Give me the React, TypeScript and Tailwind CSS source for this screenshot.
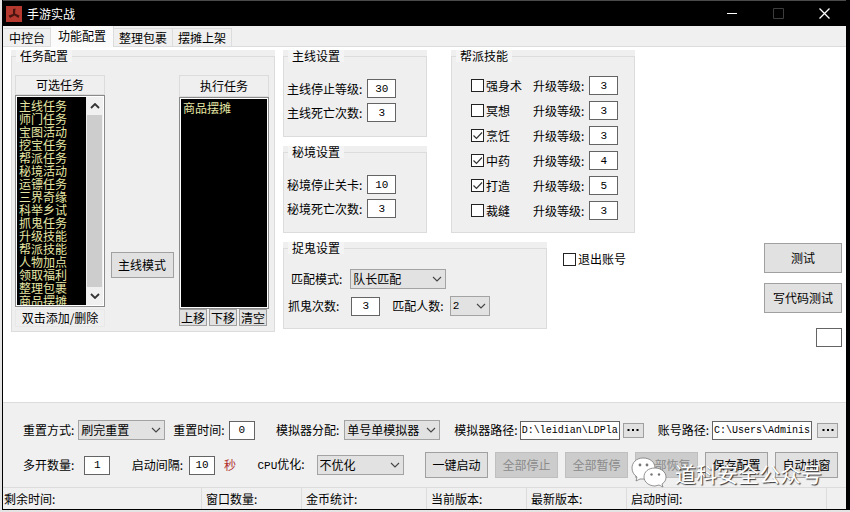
import React from 'react';
import { clsx } from 'clsx';

const TASKS = [
  '主线任务', '师门任务', '宝图活动', '挖宝任务', '帮派任务', '秘境活动', '运镖任务', '三界奇缘',
  '科举乡试', '抓鬼任务', '升级技能', '帮派技能', '人物加点', '领取福利', '整理包裹', '商品摆摊',
];

const SKILLS = [
  { name: '强身术', level: '3', on: false },
  { name: '冥想', level: '3', on: false },
  { name: '烹饪', level: '3', on: true },
  { name: '中药', level: '4', on: true },
  { name: '打造', level: '5', on: true },
  { name: '裁缝', level: '3', on: false },
];

const TABS = ['中控台', '功能配置', '整理包裹', '摆摊上架'];

const Chevron: React.FC<{ className?: string; up?: boolean; bold?: boolean }> = ({ className, up, bold }) => (
  <svg viewBox="0 0 10 6" className={clsx('h-[6px] w-[10px]', className)} fill="none" stroke="currentColor" strokeWidth={bold ? 1.8 : 1.1}>
    <path d={up ? 'M1 5 L5 1 L9 5' : 'M1 1 L5 5 L9 1'} />
  </svg>
);

const GroupBox: React.FC<{ title: string; className?: string; children: React.ReactNode }> = ({ title, className, children }) => (
  <div className={clsx('flex bg-[#efefef]', className)}>
    <fieldset className="min-w-0 flex-1 border border-[#dcdcdc]">
      <legend className="ml-1 bg-[#f4f4f4] px-1 leading-3">{title}</legend>
      {children}
    </fieldset>
  </div>
);

const Field: React.FC<{ id: string; label: string; value: string; gap?: string; width?: string; text?: string }> = ({
  id,
  label,
  value,
  gap = 'gap-[5px]',
  width = 'w-[29px]',
  text = 'text-center text-[11px]',
}) => (
  <div className={clsx('flex items-center', gap)}>
    <label htmlFor={id} className="whitespace-nowrap">{label}</label>
    <input
      id={id}
      defaultValue={value}
      className={clsx("h-[19px] border border-[#646464] bg-white font-['Liberation_Mono',monospace]", width, text)}
    />
  </div>
);

const Dropdown: React.FC<{ id: string; label: React.ReactNode; options: string[]; gap: string; width: string; font?: string }> = ({
  id,
  label,
  options,
  gap,
  width,
  font,
}) => (
  <div className={clsx('flex items-center', gap)}>
    <label htmlFor={id} className="whitespace-nowrap">{label}</label>
    <div className={clsx('relative', width)}>
      <select id={id} className={clsx('block h-5 w-full appearance-none border border-[#a3a3a3] bg-[#e2e2e2] pl-[2px] leading-4', font)}>
        {options.map((o) => (
          <option key={o}>{o}</option>
        ))}
      </select>
      <Chevron className="pointer-events-none absolute top-[7px] right-1 text-[#444]" />
    </div>
  </div>
);

const Button: React.FC<{ children: React.ReactNode; className?: string; disabled?: boolean }> = ({ children, className, disabled }) => (
  <button
    type="button"
    disabled={disabled}
    className={clsx(
      'border whitespace-nowrap',
      disabled ? 'border-[#bfbfbf] bg-[#cccccc] text-[#8a8a8a]' : 'border-[#a0a0a0] bg-[#e1e1e1]',
      className,
    )}
  >
    {children}
  </button>
);

const Dots: React.FC = () => (
  <svg viewBox="0 0 12 2" className="mx-auto h-[2px] w-3">
    <path d="M.5 0h2v2h-2zM5 0h2v2H5zM9.5 0h2v2h-2z" />
  </svg>
);

const CheckItem: React.FC<{ label: string; on?: boolean; className?: string }> = ({ label, on, className }) => (
  <label className={clsx('flex items-center gap-[2px]', className)}>
    <span className="relative flex">
      <input type="checkbox" defaultChecked={on} className="peer size-[13px] appearance-none border border-[#222] bg-white" />
      <svg viewBox="0 0 13 13" className="pointer-events-none absolute inset-0 hidden size-[13px] peer-checked:block" fill="none" stroke="#333" strokeWidth="1.2">
        <path d="M2.5 6.5 L5.5 9.5 L11 3.5" />
      </svg>
    </span>
    {label}
  </label>
);

const TitleBar: React.FC = () => (
  <header className="flex h-[26px] items-center border-t border-[#4a4a4a] bg-black pl-[3px] text-white">
    <svg viewBox="0 0 16 16" className="size-4">
      <rect width="16" height="16" fill="#b5392e" />
      <path d="M7 3 L9.5 2.5 L9 7.5 L13.5 9.5 L12.5 12 L8.5 9.5 L4 12 L2.5 9.5 L7 8 Z" fill="#4a1510" />
    </svg>
    <h1 className="ml-[5px]">手游实战</h1>
    <div className="ml-auto flex items-center gap-[35px] pr-4">
      <button type="button" aria-label="最小化" className="flex">
        <svg viewBox="0 0 11 11" className="size-[11px]" stroke="#fff"><path d="M0 5.5 H10" /></svg>
      </button>
      <button type="button" aria-label="最大化" className="flex">
        <svg viewBox="0 0 11 11" className="size-[11px]" fill="none" stroke="#3c3c3c"><path d="M.5 .5 H10.5 V10.5 H.5 Z" /></svg>
      </button>
      <button type="button" aria-label="关闭" className="flex">
        <svg viewBox="0 0 11 11" className="size-[11px]" stroke="#fff" strokeWidth="1.3"><path d="M.5 .5 L10.5 10.5 M10.5 .5 L.5 10.5" /></svg>
      </button>
    </div>
  </header>
);

const TabBar: React.FC = () => (
  <nav role="tablist" className="flex h-[21px] items-end border-b border-[#dcdcdc] bg-[#f0f0f0] pl-px">
    {TABS.map((tab, i) => (
      <button
        key={tab}
        type="button"
        role="tab"
        aria-selected={i === 1}
        className={clsx(
          'border-r border-[#dcdcdc]',
          i === 1 ? '-mb-px h-[21px] bg-[#fbfbfb] px-[7px] pb-[2px]' : 'h-[18px] border-t bg-[#f0f0f0] px-[5px]',
        )}
      >
        {tab}
      </button>
    ))}
  </nav>
);

const TaskSelect: React.FC<{ id: string; tasks: string[] }> = ({ id, tasks }) => (
  <select id={id} multiple size={16} className="h-[208px] min-w-0 flex-1 overflow-hidden bg-black text-[#e6e6a4]">
    {tasks.map((t) => (
      <option key={t} className="h-[13px] min-h-0 p-0 pl-[2px] leading-[5px]">{t}</option>
    ))}
  </select>
);

const TaskLists: React.FC = () => (
  <GroupBox title="任务配置" className="w-[264px]">
    <div className="flex justify-between pt-[13px] pr-[5px] pb-1 pl-[3px]">
      <div className="w-[90px]">
        <label htmlFor="all-tasks" className="block border border-[#dcdcdc] text-center leading-[18px]">可选任务</label>
        <div className="flex border border-[#8a8a8a] bg-white p-px">
          <TaskSelect id="all-tasks" tasks={TASKS} />
          <div className="flex w-[17px] flex-col items-center bg-[#f0f0f0] text-[#333]">
            <Chevron up bold className="my-[6px]" />
            <div className="w-[15px] flex-1 bg-[#cdcdcd]" />
            <Chevron bold className="my-[6px]" />
          </div>
        </div>
        <p className="mt-[2px] border border-[#e8e8e8] text-center leading-4">双击添加/删除</p>
      </div>
      <Button className="mt-[177px] h-[26px] w-[63px] self-start">主线模式</Button>
      <div className="w-[90px]">
        <label htmlFor="run-tasks" className="block border border-[#dcdcdc] text-center leading-5">执行任务</label>
        <div className="flex border border-[#8a8a8a] bg-white p-px">
          <TaskSelect id="run-tasks" tasks={['商品摆摊']} />
        </div>
        <div className="flex gap-[2px]">
          <Button className="h-[17px] w-7">上移</Button>
          <Button className="h-[17px] w-7">下移</Button>
          <Button className="h-[17px] w-7">清空</Button>
        </div>
      </div>
    </div>
  </GroupBox>
);

const Settings: React.FC = () => (
  <div className="flex flex-col gap-[9px]">
    <div className="flex gap-6">
      <div className="flex flex-col gap-[9px]">
        <GroupBox title="主线设置" className="h-[87px] w-36">
          <div className="flex flex-col gap-[5px] pt-[17px] pl-[3px]">
            <Field id="main-level" label="主线停止等级:" value="30" />
            <Field id="main-death" label="主线死亡次数:" value="3" />
          </div>
        </GroupBox>
        <GroupBox title="秘境设置" className="h-[87px] w-36">
          <div className="flex flex-col gap-[5px] pt-[17px] pl-[3px]">
            <Field id="realm-stage" label="秘境停止关卡:" value="10" />
            <Field id="realm-death" label="秘境死亡次数:" value="3" />
          </div>
        </GroupBox>
      </div>
      <GroupBox title="帮派技能" className="w-[184px]">
        <div className="flex flex-col gap-[6px] pt-[14px] pl-[19px]">
          {SKILLS.map((s, i) => (
            <div key={s.name} className="flex items-center">
              <CheckItem label={s.name} on={s.on} className="w-[62px]" />
              <Field id={`skill-${i}`} label="升级等级:" value={s.level} />
            </div>
          ))}
        </div>
      </GroupBox>
    </div>
    <div className="flex items-start gap-4">
      <GroupBox title="捉鬼设置" className="h-[87px] w-[264px]">
        <div className="flex flex-col gap-[7px] pt-[15px]">
          <div className="pl-[7px]">
            <Dropdown id="match-mode" label="匹配模式:" options={['队长匹配', '队员匹配']} gap="gap-2" width="w-24" />
          </div>
          <div className="flex gap-3 pl-1">
            <Field id="ghost-times" label="抓鬼次数:" value="3" gap="gap-3" />
            <Dropdown
              id="match-count"
              label="匹配人数:"
              options={['2', '3', '4', '5']}
              gap="gap-[6px]"
              width="w-10"
              font="font-['Liberation_Mono',monospace] text-[11px]"
            />
          </div>
        </div>
      </GroupBox>
      <CheckItem label="退出账号" className="mt-[9px]" />
    </div>
  </div>
);

const BottomPanel: React.FC = () => (
  <section className="flex flex-col gap-3 border-t border-[#dcdcdc] bg-[#f0f0f0] pt-[17px] pr-2 pb-[9px] pl-5">
    <div className="flex items-center justify-between">
      <div className="flex items-center gap-2">
        <Dropdown id="reset-mode" label="重置方式:" options={['刷完重置', '定时重置']} gap="gap-1" width="w-[87px]" />
        <Field id="reset-time" label="重置时间:" value="0" gap="gap-1" width="w-[26px]" />
      </div>
      <div className="flex items-center gap-[14px]">
        <Dropdown id="emulator" label="模拟器分配:" options={['单号单模拟器', '多号单模拟器']} gap="gap-[5px]" width="w-24" />
        <div className="flex items-center gap-[3px]">
          <Field id="emu-path" label="模拟器路径:" value="D:\leidian\LDPla" gap="gap-[2px]" width="w-[100px]" text="pl-px text-[10px]" />
          <Button className="h-[15px] w-[21px]">
            <Dots />
          </Button>
        </div>
        <div className="flex items-center gap-[5px]">
          <Field id="acc-path" label="账号路径:" value="C:\Users\Adminis" gap="gap-[3px]" width="w-[100px]" text="pl-px text-[10px]" />
          <Button className="h-[15px] w-[21px]">
            <Dots />
          </Button>
        </div>
      </div>
    </div>
    <div className="flex items-center justify-between">
      <Field id="multi" label="多开数量:" value="1" gap="gap-[10px]" width="w-[26px]" />
      <div className="flex items-center gap-[9px]">
        <Field id="interval" label="启动间隔:" value="10" gap="gap-[6px]" width="w-[26px]" />
        <span className="text-[#b03030]">秒</span>
      </div>
      <Dropdown
        id="cpu"
        label={<><span className="font-['Liberation_Mono',monospace] text-[11px]">CPU</span>优化:</>}
        options={['不优化', '优化']}
        gap="gap-3"
        width="w-[87px]"
      />
      <div className="flex gap-[7px]">
        <Button className="h-[26px] w-[63px]">一键启动</Button>
        <Button disabled className="h-[26px] w-[63px]">全部停止</Button>
        <Button disabled className="h-[26px] w-[63px]">全部暂停</Button>
        <Button disabled className="h-[26px] w-[63px]">全部恢复</Button>
        <Button className="h-[26px] w-[63px]">保存配置</Button>
        <Button className="h-[26px] w-[63px]">自动排窗</Button>
      </div>
    </div>
  </section>
);

const StatusBar: React.FC = () => (
  <footer className="flex h-[22px] items-center border-t border-[#dcdcdc] bg-[#f0f0f0] *:h-full *:border-r *:border-[#dcdcdc] *:leading-[22px]">
    <span className="w-[199px] pl-px">剩余时间:</span>
    <span className="w-[100px] pl-1">窗口数量:</span>
    <span className="w-[125px] pl-1">金币统计:</span>
    <span className="w-[100px] pl-1">当前版本:</span>
    <span className="w-[100px] pl-1">最新版本:</span>
    <span className="w-[200px] pl-1">启动时间:</span>
  </footer>
);

const Watermark: React.FC = () => (
  <div className="pointer-events-none absolute right-6 bottom-[21px] flex items-center gap-2">
    <svg viewBox="0 0 36 31" className="h-[31px] w-9" fill="#fff" stroke="#777" strokeWidth=".8">
      <path d="M12 1 C5 1 1 6 1 11 C1 15 3 18 6 20 L5 24 L9 22 L13 22 C20 22 24 17 24 11 C24 5 19 1 12 1 Z" />
      <path d="M24 11 C17 11 13 15 13 20 C13 25 18 29 24 29 L28 28 L32 30 L31 27 C34 25 35 23 35 20 C35 15 30 11 24 11 Z" />
      <g fill="#777" stroke="none">
        <circle cx="9" cy="8" r="1.4" />
        <circle cx="16" cy="8" r="1.4" />
        <circle cx="20.5" cy="17.5" r="1.2" />
        <circle cx="28" cy="17.5" r="1.2" />
      </g>
    </svg>
    <span className="text-[21px] leading-6 text-white [text-shadow:1px_1px_1px_#333]">道科安全公众号</span>
  </div>
);

const App: React.FC = () => (
  <div className="min-h-screen bg-[#e4e4e4] pl-[2px] font-['Noto_Sans_CJK_SC',sans-serif] text-xs leading-4 text-black">
    <main className="relative flex min-h-[510px] flex-col border-r-4 border-b border-l border-black bg-white">
      <TitleBar />
      <TabBar />
      <div className="flex flex-1 items-start gap-2 pt-[3px] pr-1 pl-2">
        <TaskLists />
        <Settings />
        <div className="mt-[193px] ml-auto flex flex-col items-end gap-[10px]">
          <Button className="h-[30px] w-[78px]">测试</Button>
          <Button className="h-[30px] w-[78px]">写代码测试</Button>
          <input aria-label="输出" className="mt-[5px] h-[19px] w-[26px] border border-[#646464] bg-white" />
        </div>
      </div>
      <BottomPanel />
      <StatusBar />
      <Watermark />
    </main>
  </div>
);

export default App;
